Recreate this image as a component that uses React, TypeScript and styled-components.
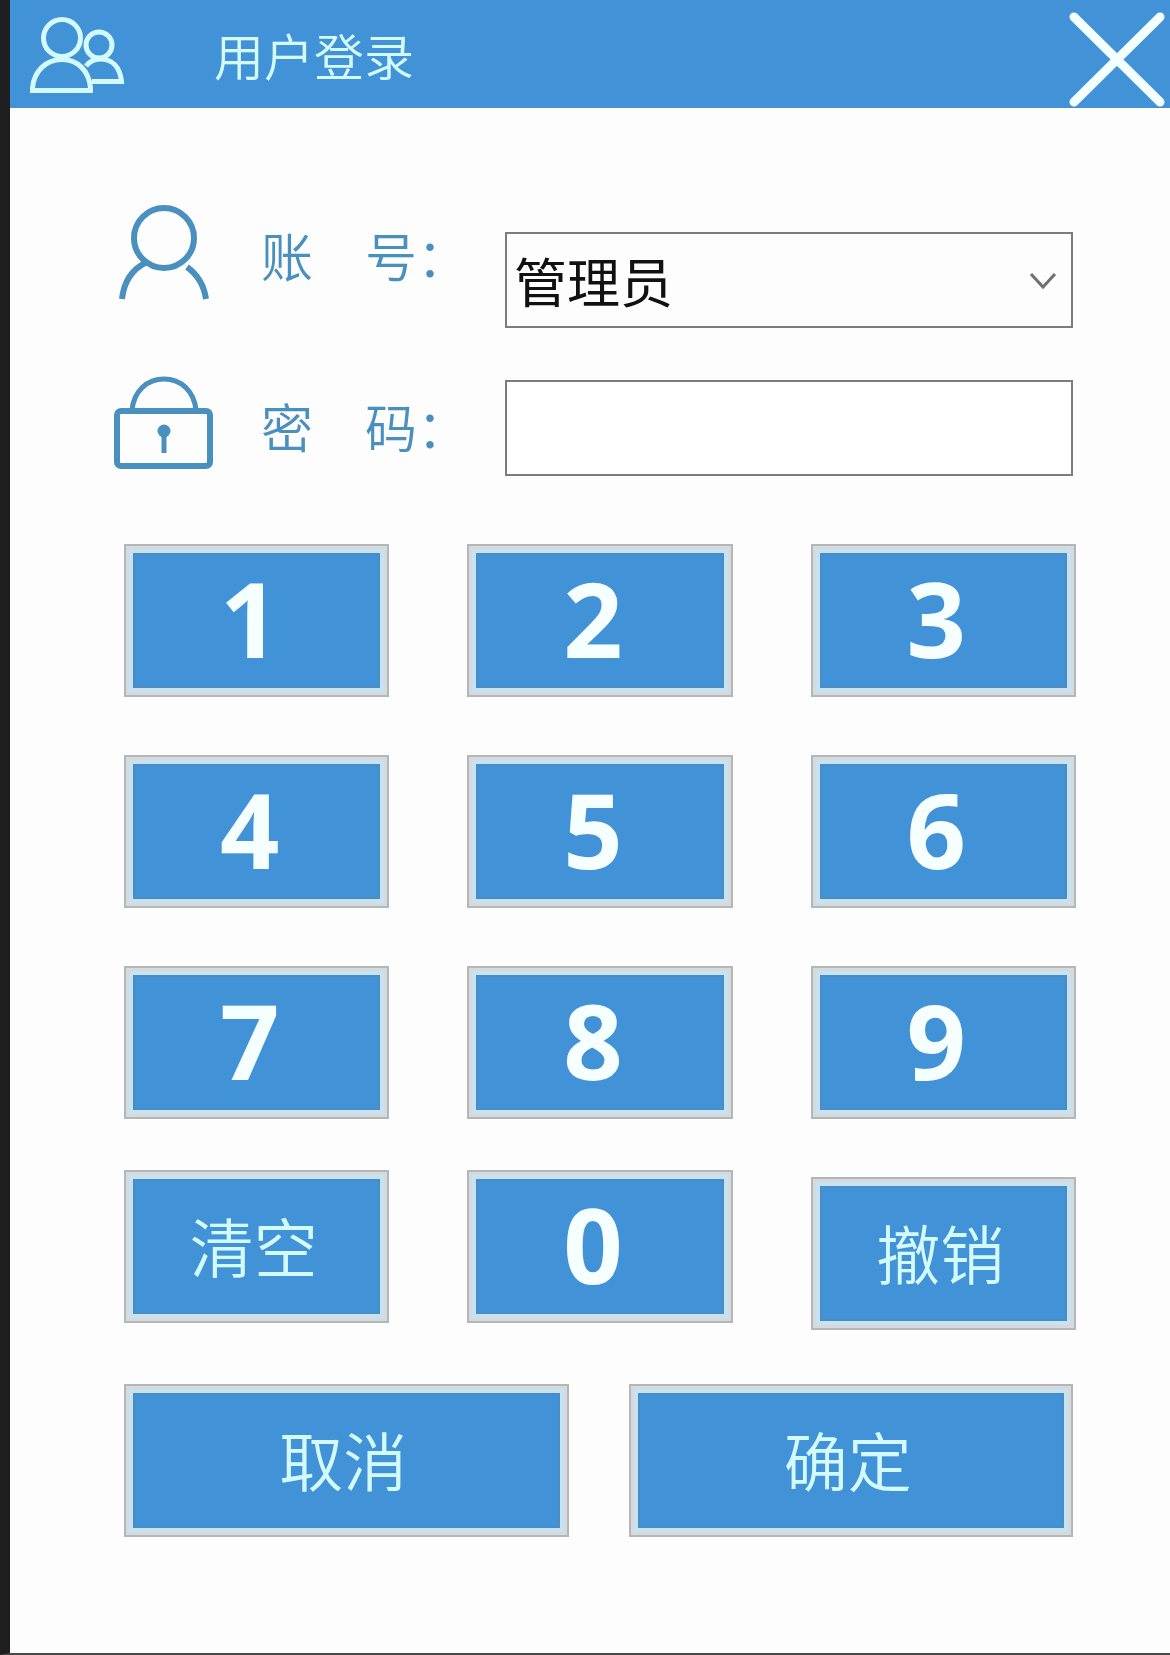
import React, { useState } from "react";
import styled, { createGlobalStyle } from "styled-components";

const blue = "#4192d6";
const ice = "#d3fbff";
const lineBlue = "#4a90bf";
const cjk = `"Noto Sans CJK SC", "Open Sans", sans-serif`;

const GlobalStyle = createGlobalStyle`
  *, *::before, *::after { box-sizing: border-box; }
  body { margin: 0; background: #fdfdfd; }
  button, input, select { margin: 0; border-radius: 0; font-family: ${cjk}; }
`;

const Window = styled.main`
  display: flex;
  flex-direction: column;
  min-height: 100vh;
  border-left: 10px solid #1e1e1e;
  border-bottom: 2px solid #4a4749;
  background: #fdfdfd;
  font-family: ${cjk};
`;

const TitleBar = styled.header`
  display: flex;
  align-items: center;
  height: 108px;
  padding: 0 4px 0 18px;
  background: ${blue};
  color: ${ice};
`;

const Title = styled.h1`
  flex: 1;
  margin: 0 0 0 86px;
  font-size: 50px;
  line-height: 72px;
  font-weight: 350;
`;

const CloseButton = styled.button`
  display: flex;
  padding: 9px 0 0;
  border: 0;
  background: none;
  cursor: pointer;
`;

const Form = styled.form`
  display: flex;
  flex-direction: column;
  padding: 97px 94px 60px 103px;
`;

const Fields = styled.div`
  display: flex;
  flex-direction: column;
  gap: 48px;
  padding-right: 3px;
`;

const Field = styled.div<{ $height: number }>`
  display: grid;
  grid-template-columns: 148px 244px minmax(0, 1fr);
  align-items: start;
  height: ${(p) => p.$height}px;
`;

const Label = styled.label`
  color: ${lineBlue};
  font-size: 52px;
  font-weight: 350;
  line-height: 100px;
  white-space: pre;
`;

const Control = styled.div`
  position: relative;
  align-self: end;
`;

const Select = styled.select`
  display: block;
  width: 100%;
  height: 96px;
  padding: 0 60px 0 7px;
  border: 2px solid #7c7c7c;
  background: #fdfdfd;
  color: #111;
  font-size: 53px;
  appearance: none;
`;

const Chevron = styled.svg`
  position: absolute;
  right: 15px;
  top: 50%;
  transform: translateY(-50%);
  pointer-events: none;
`;

const PasswordInput = styled.input`
  display: block;
  width: 100%;
  height: 96px;
  padding: 0 10px;
  border: 2px solid #7c7c7c;
  background: #fff;
  color: #111;
  font-size: 53px;
`;

const Keypad = styled.div`
  display: grid;
  grid-template-columns: repeat(3, minmax(0, 1fr));
  gap: 58px 78px;
  margin: 68px 0 0 11px;
`;

const EditKeys = styled(Keypad)`
  align-items: start;
  margin-top: 51px;
`;

const Actions = styled.div`
  display: grid;
  grid-template-columns: repeat(2, minmax(0, 1fr));
  gap: 60px;
  margin: 54px 3px 0 11px;
`;

const Key = styled.button<{ $lowered?: boolean }>`
  height: 153px;
  margin-top: ${(p) => (p.$lowered ? 7 : 0)}px;
  padding: 0 6px 6px 0;
  border: 2px solid #b5b6b8;
  background: ${blue};
  box-shadow: inset 0 0 0 3px #d5dadd, inset 0 0 0 7px #c9e2f1, inset 0 0 0 9px #4a8dc2;
  color: ${ice};
  font-size: 64px;
  font-weight: 350;
  line-height: 92px;
  cursor: pointer;
`;

const DigitKey = styled(Key)`
  padding: 0 14px 6px 0;
  color: #f6ffff;
  font-family: "Open Sans", "Noto Sans", sans-serif;
  font-size: 104px;
  font-weight: 700;
  line-height: 140px;
`;

const UsersIcon = () => (
  <svg width="100" height="84" viewBox="28 12 100 84" fill="none" stroke={ice} strokeWidth="5" aria-hidden="true">
    <circle cx="62" cy="38" r="18.5" />
    <path d="M32.500 90.500V88C34 71 46 59.500 62 59.500S89 71 90.500 88V90.500Z" />
    <circle cx="99" cy="45" r="13" />
    <path d="M86 66C90 61 95 59 100 59C112 59 120 67 121.500 81.500H92" />
  </svg>
);

const CloseIcon = () => (
  <svg width="98" height="96" viewBox="0 0 98 96" stroke="#f4ffff" strokeWidth="9" strokeLinecap="round" aria-hidden="true">
    <path d="M6 6L92 91M92 6L6 91" />
  </svg>
);

const PersonIcon = () => (
  <svg width="101" height="96" viewBox="113 205 101 96" fill="none" stroke={lineBlue} strokeWidth="6" aria-hidden="true">
    <circle cx="164" cy="238" r="30" />
    <path d="M122 299C124 281 132 269 147 262M187 267C198 275 204 285 206 299" />
  </svg>
);

const LockIcon = () => (
  <svg width="101" height="95" viewBox="113 376 101 95" fill="none" stroke={lineBlue} strokeWidth="6" aria-hidden="true">
    <rect x="117" y="411" width="93" height="55" rx="4" />
    <path d="M132 410C134 391 147 379 164 379S194 391 196 410" strokeWidth="5" />
    <circle cx="164" cy="431" r="6.500" fill={lineBlue} stroke="none" />
    <path d="M164 431V453" strokeWidth="5" />
  </svg>
);

export default function App() {
  const [password, setPassword] = useState("");
  const digit = (d: string) => (
    <DigitKey key={d} type="button" onClick={() => setPassword((p) => p + d)}>
      {d}
    </DigitKey>
  );

  return (
    <>
      <GlobalStyle />
      <Window>
        <TitleBar>
          <UsersIcon />
          <Title>用户登录</Title>
          <CloseButton type="button" aria-label="关闭">
            <CloseIcon />
          </CloseButton>
        </TitleBar>
        <Form onSubmit={(e) => e.preventDefault()}>
          <Fields>
            <Field $height={123}>
              <PersonIcon />
              <Label htmlFor="account">账　号：</Label>
              <Control>
                <Select id="account" defaultValue="admin">
                  <option value="admin">管理员</option>
                </Select>
                <Chevron width="30" height="22" viewBox="0 0 30 22" fill="none" stroke="#707070" strokeWidth="3" aria-hidden="true">
                  <path d="M3 5L15 18L27 5" />
                </Chevron>
              </Control>
            </Field>
            <Field $height={100}>
              <LockIcon />
              <Label htmlFor="password">密　码：</Label>
              <Control>
                <PasswordInput
                  id="password"
                  type="password"
                  value={password}
                  onChange={(e) => setPassword(e.target.value)}
                />
              </Control>
            </Field>
          </Fields>
          <Keypad>{["1", "2", "3", "4", "5", "6", "7", "8", "9"].map(digit)}</Keypad>
          <EditKeys>
            <Key type="button" onClick={() => setPassword("")}>清空</Key>
            {digit("0")}
            <Key type="button" $lowered onClick={() => setPassword((p) => p.slice(0, -1))}>撤销</Key>
          </EditKeys>
          <Actions>
            <Key type="button">取消</Key>
            <Key type="submit">确定</Key>
          </Actions>
        </Form>
      </Window>
    </>
  );
}
